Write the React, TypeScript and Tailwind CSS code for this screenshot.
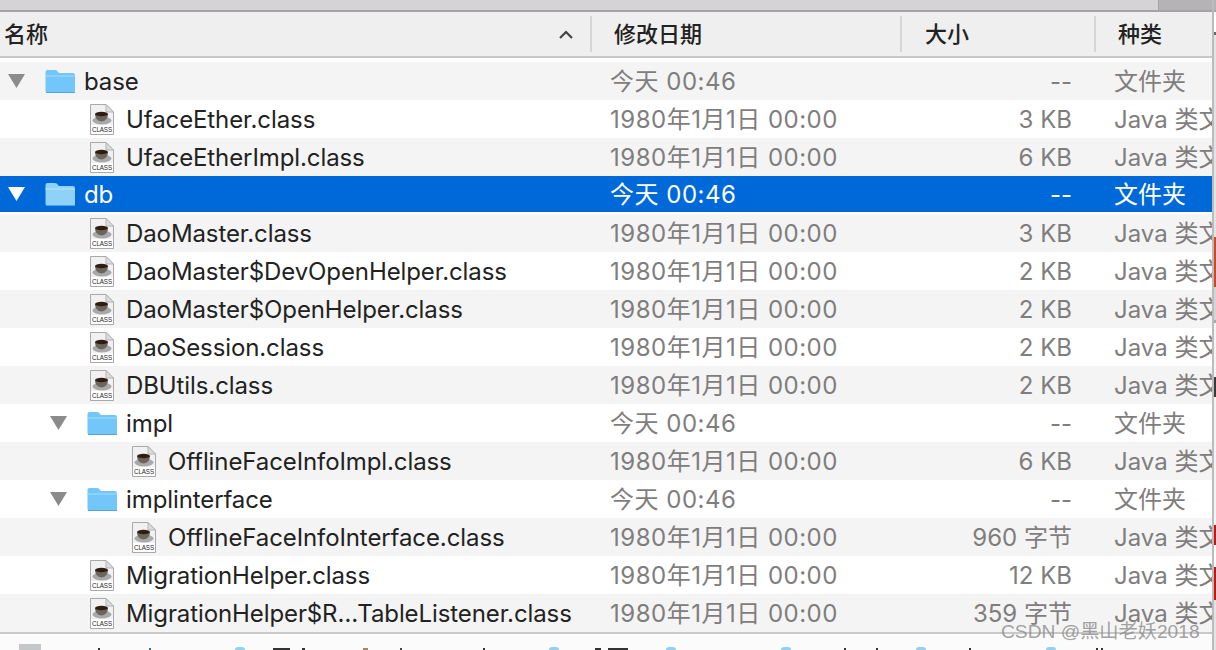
import React from "react";

const FONT = "font-['Inter','Noto_Sans_CJK_SC',sans-serif]";

function Triangle({ selected }: { selected?: boolean }) {
  return (
    <svg width="17" height="14" viewBox="0 0 17 14" className="shrink-0">
      <path d="M0 0 H17 L8.5 14 Z" fill={selected ? "#ffffff" : "#8b8b8b"} />
    </svg>
  );
}

function Folder({ selected }: { selected?: boolean }) {
  return (
    <svg width="31" height="25" viewBox="0 0 31 25" className="shrink-0">
      <path d="M0.5 3 Q0.5 1 2.5 1 H10 Q12 1 13 3 L14 4 H28 Q30 4 30 6 V22 Q30 24 28 24 H2.5 Q0.5 24 0.5 22 Z" fill={selected ? "#8ed3f7" : "#72c6f9"} />
      <path d="M0.5 7 H30" stroke={selected ? "#b5e3fb" : "#9adafb"} strokeWidth="1.2" />
      <path d="M1 23.5 H30" stroke="#4da7de" strokeWidth="1" />
    </svg>
  );
}

function ClassIcon() {
  return (
    <svg width="24" height="31" viewBox="0 0 24 31" className="shrink-0">
      <path d="M1 .5 H16 L23.5 8 V30.5 H.5 V.5 Z" fill="#f1f1f1" stroke="#a9a9a9" />
      <path d="M16 .5 V8 H23.5 Z" fill="#dcdcdc" stroke="#b5b5b5" />
      <ellipse cx="12" cy="16.5" rx="9.5" ry="4" fill="#a9a9a9" />
      <path d="M5 10 H18 Q18 16.5 11.5 17.5 Q5 16.5 5 10 Z" fill="#6a655d" />
      <ellipse cx="11.5" cy="10" rx="6.5" ry="2.2" fill="#2f1d12" />
      <rect x="1" y="21" width="22" height="9" fill="#ffffff" />
      <text x="2" y="28.2" textLength="20" lengthAdjust="spacingAndGlyphs" fontSize="7.2" fontWeight="500" fontFamily="'Liberation Sans',sans-serif" fill="#262626">CLASS</text>
    </svg>
  );
}

type Row = {
  name: string;
  date: string;
  size: string;
  kind: string;
  folder?: boolean;
  indent: string;
};

const D = "1980年1月1日 00:00";
const T = "今天 00:46";
const J = "Java 类文件";
const F = "文件夹";

const rows: Row[] = [
  { name: "base", date: T, size: "--", kind: F, folder: true, indent: "pl-[8px]" },
  { name: "UfaceEther.class", date: D, size: "3 KB", kind: J, indent: "pl-[90px]" },
  { name: "UfaceEtherImpl.class", date: D, size: "6 KB", kind: J, indent: "pl-[90px]" },
  { name: "db", date: T, size: "--", kind: F, folder: true, indent: "pl-[8px]" },
  { name: "DaoMaster.class", date: D, size: "3 KB", kind: J, indent: "pl-[90px]" },
  { name: "DaoMaster$DevOpenHelper.class", date: D, size: "2 KB", kind: J, indent: "pl-[90px]" },
  { name: "DaoMaster$OpenHelper.class", date: D, size: "2 KB", kind: J, indent: "pl-[90px]" },
  { name: "DaoSession.class", date: D, size: "2 KB", kind: J, indent: "pl-[90px]" },
  { name: "DBUtils.class", date: D, size: "2 KB", kind: J, indent: "pl-[90px]" },
  { name: "impl", date: T, size: "--", kind: F, folder: true, indent: "pl-[50px]" },
  { name: "OfflineFaceInfoImpl.class", date: D, size: "6 KB", kind: J, indent: "pl-[132px]" },
  { name: "implinterface", date: T, size: "--", kind: F, folder: true, indent: "pl-[50px]" },
  { name: "OfflineFaceInfoInterface.class", date: D, size: "960 字节", kind: J, indent: "pl-[132px]" },
  { name: "MigrationHelper.class", date: D, size: "12 KB", kind: J, indent: "pl-[90px]" },
  { name: "MigrationHelper$R…TableListener.class", date: D, size: "359 字节", kind: J, indent: "pl-[90px]" },
];

const peeks = [
  "ml-[19px] w-[22px] h-[6px] bg-[#c3c7c7]",
  "ml-[57px] w-[2px] h-[2px] bg-[#333333]",
  "ml-[49px] w-[2px] h-[2px] bg-[#556677]",
  "ml-[84px] w-[10px] h-[3px] bg-[#8ed3f7] rounded-t-[3px]",
  "ml-[28px] w-[17px] h-[2px] bg-[#333333]",
  "ml-[12px] w-[3px] h-[2px] bg-[#333333]",
  "ml-[58px] w-[5px] h-[2px] bg-[#a8845f]",
  "ml-[32px] w-[2px] h-[2px] bg-[#444444]",
  "ml-[81px] w-[2px] h-[2px] bg-[#333333]",
  "ml-[64px] w-[10px] h-[3px] bg-[#8ed3f7] rounded-t-[3px]",
  "ml-[36px] w-[6px] h-[2px] bg-[#333333]",
  "ml-[7px] w-[20px] h-[2px] bg-[#333333]",
  "ml-[38px] w-[10px] h-[3px] bg-[#8ed3f7] rounded-t-[3px]",
  "ml-[105px] w-[10px] h-[3px] bg-[#8ed3f7] rounded-t-[3px]",
  "ml-[53px] w-[2px] h-[2px] bg-[#333333]",
  "ml-[30px] w-[2px] h-[2px] bg-[#333333]",
  "ml-[38px] w-[10px] h-[3px] bg-[#8ed3f7] rounded-t-[3px]",
  "ml-[43px] w-[2px] h-[2px] bg-[#333333]",
  "ml-[75px] w-[10px] h-[3px] bg-[#8ed3f7] rounded-t-[3px]",
  "ml-[40px] w-[2px] h-[2px] bg-[#333333]",
  "ml-[3px] w-[2px] h-[2px] bg-[#333333]",
];

const strip = [
  "h-[10px] bg-[#b5b3b5]",
  "h-[2px] bg-[#a5a3a5]",
  "h-[20px] bg-[#ffffff]",
  "h-[3px] bg-[#666666]",
  "h-[202px] bg-[#e4e4e4]",
  "h-[50px] bg-[#c84a2a]",
  "h-[33px] bg-[#d5d5d5]",
  "h-[3px] bg-[#a9a9a9]",
  "h-[54px] bg-[#f4f4f4]",
  "h-[20px] bg-[#3a3a3a]",
  "h-[128px] bg-[#f4f4f4]",
  "h-[20px] bg-[#c01818]",
  "h-[22px] bg-[#ffffff]",
  "h-[33px] bg-[#c01818]",
  "h-[50px] bg-[#e4e4e4]",
];

export default function App() {
  return (
    <div className={`relative flex w-[1216px] h-[650px] overflow-hidden bg-white ${FONT}`}>
      <div className="flex flex-col w-[1212px] shrink-0">
        <div className="flex h-[10px] shrink-0">
          <div className="w-[1158px] bg-[#d5d3d5]" />
          <div className="w-[1px] bg-[#a5a3a5]" />
          <div className="flex-1 bg-[#b5b3b5]" />
        </div>
        <div className="h-[2px] shrink-0 bg-[#a5a3a5]" />

        <div className="flex items-center h-[46px] shrink-0 bg-[#efefef] border-b-2 border-[#c8c8c8] text-[22px] font-medium text-[#222222]">
          <div className="flex items-center justify-between w-[592px] h-[36px] pl-[4px] pr-[17px] border-r-2 border-[#d6d6d6]">
            <span>名称</span>
            <svg width="14" height="9" viewBox="0 0 14 9">
              <path d="M1 8 L7 2 L13 8" fill="none" stroke="#444444" strokeWidth="2.2" />
            </svg>
          </div>
          <div className="flex items-center w-[310px] h-[36px] pl-[22px] border-r-2 border-[#d6d6d6]">修改日期</div>
          <div className="flex items-center w-[194px] h-[36px] pl-[23px] border-r-2 border-[#d6d6d6]">大小</div>
          <div className="flex items-center flex-1 h-[36px] pl-[22px]">种类</div>
        </div>

        <div className="h-[4px] shrink-0 bg-white" />

        <div className="flex flex-col shrink-0">
          {rows.map((r, i) => {
            const selected = r.name === "db";
            const stripe = i % 2 === 0 ? "bg-[#f4f4f4]" : "bg-white";
            const muted = selected ? "text-white" : "text-[#7f7d7d]";
            return (
              <div key={r.name} className={`h-[38px] ${stripe}`}>
                <div
                  className={`flex items-center text-[24px] whitespace-nowrap ${
                    selected ? "h-[36px] bg-[#0069d9] text-white" : "h-[38px]"
                  }`}
                >
                  <div className={`flex items-center w-[610px] shrink-0 tracking-[-0.1px] ${r.indent} ${selected ? "text-white" : "text-[#222222]"}`}>
                    {r.folder ? (
                      <div className="flex items-center gap-[20px]">
                        <Triangle selected={selected} />
                        <div className="flex items-center gap-[8px]">
                          <Folder selected={selected} />
                          <span className="pt-[2px]">{r.name}</span>
                        </div>
                      </div>
                    ) : (
                      <div className="flex items-center gap-[12px]">
                        <ClassIcon />
                        <span className="pt-[2px]">{r.name}</span>
                      </div>
                    )}
                  </div>
                  <div className={`w-[400px] shrink-0 pt-[2px] tracking-[0.5px] ${muted}`}>{r.date}</div>
                  <div className={`w-[62px] shrink-0 pt-[2px] flex justify-end ${muted}`}>{r.size}</div>
                  <div className={`ml-[42px] w-[98px] pt-[2px] overflow-hidden ${muted}`}>{r.kind}</div>
                </div>
              </div>
            );
          })}
        </div>

        <div className="h-[2px] shrink-0 bg-[#c8c8c8]" />

        <div className="flex items-end flex-1 bg-[#fbfbfb] overflow-hidden">
          {peeks.map((p, i) => (
            <div key={i} className={`shrink-0 ${p}`} />
          ))}
        </div>
      </div>

      <div className="flex flex-col w-[4px] shrink-0 border-l-2 border-[#bcbcbc]">
        {strip.map((s, i) => (
          <div key={i} className={`shrink-0 ${s}`} />
        ))}
      </div>

      <div className="absolute left-[1001px] top-[620px] text-[19.2px] leading-[24px] text-[#8a8a8a]/80 whitespace-nowrap font-['Liberation_Sans','Noto_Sans_CJK_SC',sans-serif]">
        CSDN @黑山老妖2018
      </div>
    </div>
  );
}
